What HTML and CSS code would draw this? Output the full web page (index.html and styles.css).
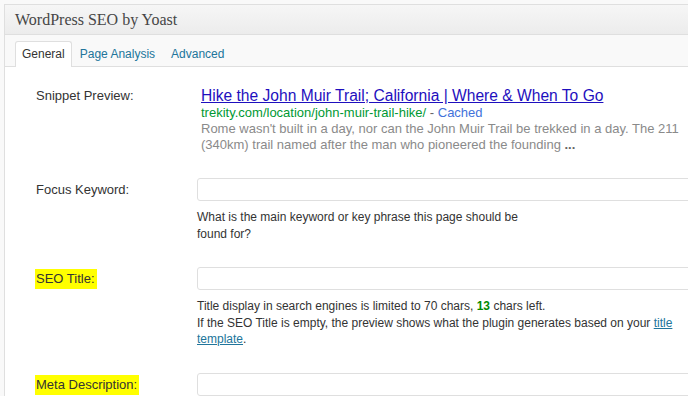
FILE: index.html
```html
<!DOCTYPE html>
<html lang="en">
<head>
  <meta charset="UTF-8" />
  <title>WordPress SEO by Yoast</title>
  <link rel="stylesheet" href="styles.css">
</head>
<body>

<div class="postbox">
  <h3 class="hndle">WordPress SEO by Yoast</h3>

  <ul class="tabs">
    <li class="tab active">General</li>
    <li class="tab"><a href="#">Page Analysis</a></li>
    <li class="tab"><a href="#">Advanced</a></li>
  </ul>

  <div class="panel">

    <div class="row snippet-row">
      <div class="label">Snippet Preview:</div>
      <div class="field">
        <a class="snip-title" href="#">Hike the John Muir Trail; California | Where &amp; When To Go</a>
        <div class="snip-url">trekity.com/location/john-muir-trail-hike/ <span class="sep">-</span> <span class="cached">Cached</span></div>
        <div class="snip-desc">Rome wasn't built in a day, nor can the John Muir Trail be trekked in a day. The 211 (340km) trail named after the man who pioneered the founding <b>...</b></div>
      </div>
    </div>

    <div class="row">
      <div class="label">Focus Keyword:</div>
      <div class="field">
        <input type="text" class="text-input" />
        <p class="desc narrow">What is the main keyword or key phrase this page should be found for?</p>
      </div>
    </div>

    <div class="row">
      <div class="label"><span class="mark">SEO Title:</span></div>
      <div class="field">
        <input type="text" class="text-input" />
        <p class="desc">Title display in search engines is limited to 70 chars, <span class="good">13</span> chars left.<br>
        If the SEO Title is empty, the preview shows what the plugin generates based on your <a href="#">title template</a>.</p>
      </div>
    </div>

    <div class="row">
      <div class="label"><span class="mark">Meta Description:</span></div>
      <div class="field">
        <input type="text" class="text-input" />
      </div>
    </div>

  </div>
</div>

</body>
</html>
```

FILE: styles.css
```css
* {
  box-sizing: border-box;
}

html, body {
  overflow: hidden;
}

body {
  margin: 0;
  background: #f9f9f9;
  font-family: "Liberation Sans", Arial, sans-serif;
  color: #333;
}

.postbox {
  margin: 4px 0 0 4px;
  width: 720px;
  border: 1px solid #dfdfdf;
  border-right: none;
  background: #fff;
  min-height: 400px;
}

.hndle {
  margin: 0;
  height: 30px;
  padding: 0 10px;
  line-height: 29px;
  font-family: "Liberation Serif", Georgia, serif;
  font-size: 16px;
  font-weight: normal;
  color: #464646;
  background: linear-gradient(to bottom, #f6f6f6, #ececec);
  border-bottom: 1px solid #dfdfdf;
}

.tabs {
  list-style: none;
  margin: 0;
  padding: 6px 0 0 10px;
  display: flex;
  background: #f9f9f9;
  border-bottom: 1px solid #dfdfdf;
  height: 32px;
}

.tab {
  font-size: 12px;
  padding: 0 7px;
  line-height: 24px;
  border: 1px solid transparent;
  border-bottom: none;
  margin-bottom: -1px;
}

.tab a {
  color: #21759b;
  text-decoration: none;
}

.tab.active {
  background: #fff;
  border-color: #dfdfdf;
  border-radius: 3px 3px 0 0;
  padding: 0 6px;
  color: #333;
}

.panel {
  padding: 0 0 0 31px;
}

.row {
  display: grid;
  grid-template-columns: 161px 1fr;
  padding-bottom: 25px;
}

.snippet-row {
  padding-top: 20px;
}

.label {
  font-size: 13px;
  line-height: 16px;
  padding-top: 4px;
}

.snippet-row .label {
  padding-top: 1px;
}

.mark {
  background: #ffff00;
  padding: 2px 2px 3px 1px;
  margin-left: -1px;
}

.snip-title {
  display: inline-block;
  margin-left: 4px;
  font-size: 15.6px;
  line-height: 18px;
  color: #1e0fbe;
}

.snip-url {
  margin-left: 4px;
  font-size: 13px;
  line-height: 16px;
  color: #009933;
}

.snip-url .sep {
  color: #666;
}

.snip-url .cached {
  color: #4272db;
}

.snip-desc {
  margin-left: 4px;
  font-size: 13px;
  line-height: 16px;
  color: #8a8a8a;
}

.snip-desc b {
  color: #666;
}

.text-input {
  display: block;
  width: 100%;
  height: 23px;
  margin: 0;
  border: 1px solid #dfdfdf;
  border-radius: 3px;
  background: #fff;
}

.desc {
  margin: 8px 0 0;
  font-size: 12px;
  line-height: 16.5px;
  color: #333;
}

.desc.narrow {
  max-width: 340px;
}

.desc a {
  color: #21759b;
}

.good {
  color: #008a00;
  font-weight: bold;
}
```
